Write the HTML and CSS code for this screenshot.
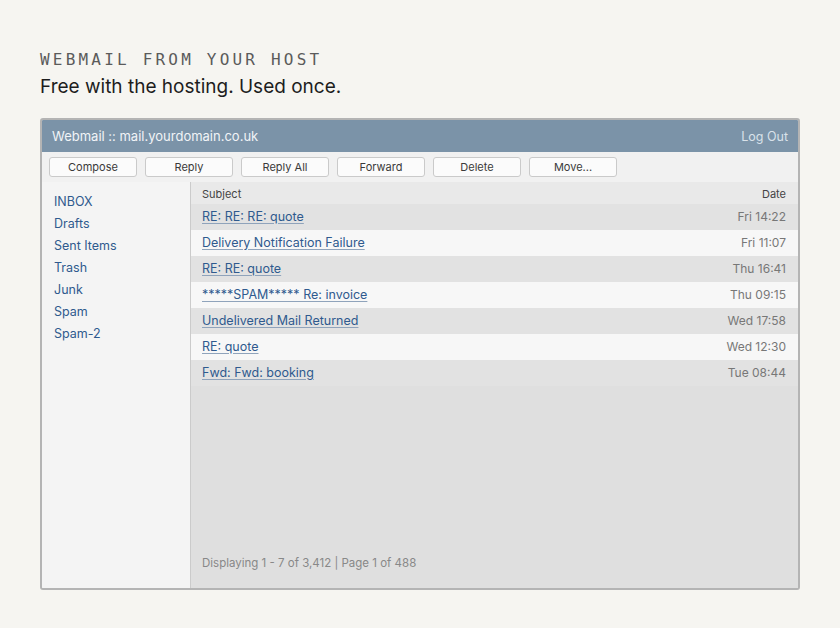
FILE: index.html
```html
<!DOCTYPE html>
<html lang="en">
<head>
  <meta charset="UTF-8">
  <title>Webmail from your host</title>
  <link rel="stylesheet" href="styles.css">
</head>
<body>
  <header class="intro">
    <p class="eyebrow">WEBMAIL FROM YOUR HOST</p>
    <h1>Free with the hosting. Used once.</h1>
  </header>

  <div class="mail-window">
    <div class="title-bar">
      <span>Webmail :: mail.yourdomain.co.uk</span>
      <a href="#" class="logout">Log Out</a>
    </div>

    <div class="toolbar">
      <button>Compose</button>
      <button>Reply</button>
      <button>Reply All</button>
      <button>Forward</button>
      <button>Delete</button>
      <button>Move...</button>
    </div>

    <div class="mail-body">
      <ul class="folders">
        <li><a href="#">INBOX</a></li>
        <li><a href="#">Drafts</a></li>
        <li><a href="#">Sent Items</a></li>
        <li><a href="#">Trash</a></li>
        <li><a href="#">Junk</a></li>
        <li><a href="#">Spam</a></li>
        <li><a href="#">Spam-2</a></li>
      </ul>

      <div class="message-pane">
        <div class="list-head">
          <span>Subject</span>
          <span>Date</span>
        </div>
        <div class="msg"><a href="#">RE: RE: RE: quote</a><span>Fri 14:22</span></div>
        <div class="msg"><a href="#">Delivery Notification Failure</a><span>Fri 11:07</span></div>
        <div class="msg"><a href="#">RE: RE: quote</a><span>Thu 16:41</span></div>
        <div class="msg"><a href="#">*****SPAM***** Re: invoice</a><span>Thu 09:15</span></div>
        <div class="msg"><a href="#">Undelivered Mail Returned</a><span>Wed 17:58</span></div>
        <div class="msg"><a href="#">RE: quote</a><span>Wed 12:30</span></div>
        <div class="msg"><a href="#">Fwd: Fwd: booking</a><span>Tue 08:44</span></div>

        <p class="pager">Displaying 1 - 7 of 3,412 | Page 1 of 488</p>
      </div>
    </div>
  </div>
</body>
</html>
```

FILE: styles.css
```css
body {
  margin: 0;
  padding: 48px 40px 40px;
  background: #f6f5f1;
  font-family: Inter, 'Noto Sans', sans-serif;
  color: #1c1c1c;
}

.intro {
  margin-bottom: 18px;
}

.eyebrow {
  margin: 0;
  font-family: 'DejaVu Sans Mono', 'Liberation Mono', monospace;
  font-size: 16px;
  letter-spacing: 3.2px;
  color: #5b5b5b;
  line-height: 24px;
}

h1 {
  margin: 2px 0 0;
  font-size: 19px;
  font-weight: 400;
  line-height: 26px;
  color: #1d1d1d;
}

.mail-window {
  width: 756px;
  height: 468px;
  border: 2px solid #b4b4b4;
  border-radius: 3px;
  display: flex;
  flex-direction: column;
  overflow: hidden;
  background: #f3f3f3;
}

.title-bar {
  height: 32px;
  background: #7b93a8;
  display: flex;
  align-items: center;
  justify-content: space-between;
  padding: 0 10px;
  color: #f1f4f7;
  font-size: 13px;
}

.logout {
  color: #d9e2ea;
  text-decoration: none;
  font-size: 12.5px;
}

.toolbar {
  height: 30px;
  box-sizing: border-box;
  padding: 5px 7px;
  display: flex;
  gap: 8px;
  background: #f1f1f1;
}

.toolbar button {
  width: 88px;
  height: 20px;
  padding: 0;
  background: #fbfbfb;
  border: 1px solid #cacaca;
  border-radius: 3px;
  font-family: inherit;
  font-size: 11px;
  color: #3a3a3a;
}

.mail-body {
  flex: 1;
  display: flex;
}

.folders {
  width: 148px;
  margin: 0;
  padding: 9px 12px;
  box-sizing: border-box;
  list-style: none;
  background: #f4f4f4;
}

.folders li {
  line-height: 22px;
  font-size: 12.5px;
}

.folders a {
  color: #2f5a8e;
  text-decoration: none;
}

.message-pane {
  flex: 1;
  display: flex;
  flex-direction: column;
  background: #dfdfdf;
  border-left: 1px solid #cbcbcb;
}

.list-head,
.msg {
  display: flex;
  justify-content: space-between;
  align-items: center;
  box-sizing: border-box;
  padding: 0 12px 0 11px;
}

.list-head {
  height: 22px;
  padding-top: 1px;
  background: #e9e9e9;
  font-size: 11px;
  color: #444;
}

.msg {
  height: 26px;
  padding-bottom: 2px;
  background: #e2e2e2;
  font-size: 12.5px;
}

.msg:nth-child(odd) {
  background: #f7f7f7;
}

.msg a {
  color: #2f5a8e;
  text-decoration: underline;
  text-underline-offset: 2px;
  text-decoration-color: #8fa3bb;
}

.msg span {
  color: #777;
  font-size: 12px;
}

.pager {
  margin: auto 0 0;
  padding: 0 12px 18px 11px;
  font-size: 11.5px;
  color: #888;
}
```
